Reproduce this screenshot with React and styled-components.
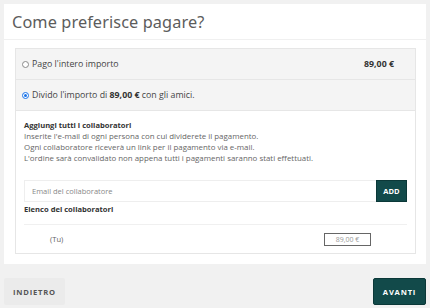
import React from "react";
import styled, { createGlobalStyle } from "styled-components";

const Global = createGlobalStyle`
  html, body { margin: 0; padding: 0; background: #f1f1f1; }
  body { font-family: "Open Sans", "Liberation Sans", sans-serif; color: #333; }
  * { box-sizing: border-box; }
`;

const Page = styled.div`
  width: 430px;
  height: 308px;
  padding: 4px 4px 0 4px;
  display: flex;
  flex-direction: column;
`;

const Card = styled.div`
  background: #fff;
  display: flex;
  flex-direction: column;
`;

const Header = styled.div`
  height: 36px;
  border-bottom: 1px solid #f0f0f0;
  display: flex;
  align-items: center;
  padding-left: 8px;
`;

const Title = styled.h1`
  margin: 0;
  font-family: "Noto Sans", "Open Sans", sans-serif;
  font-weight: 400;
  font-size: 16.3px;
  color: #5c5c5c;
  letter-spacing: 0.1px;
`;

const Body = styled.div`
  padding: 8px 10px 10px 11px;
`;

const Box = styled.div`
  border: 1px solid #e6e6e6;
`;

const OptionRow = styled.label`
  display: flex;
  align-items: center;
  height: 31px;
  background: #f4f4f4;
  border-bottom: 1px solid #e6e6e6;
  padding: 0 21px 0 6px;
  font-size: 8.8px;
  color: #444;
`;

const Radio = styled.span`
  width: 7px;
  height: 7px;
  border-radius: 50%;
  border: 1px solid ${(p) => (p.$checked ? "#1a73e8" : "#8a8a8a")};
  background: #fff;
  margin-right: 3px;
  display: flex;
  align-items: center;
  justify-content: center;
  &::after {
    content: "";
    width: 3px;
    height: 3px;
    border-radius: 50%;
    background: ${(p) => (p.$checked ? "#1a73e8" : "transparent")};
  }
`;

const OptionText = styled.span`
  flex: 1;
  b { font-weight: 700; color: #333; }
`;

const Amount = styled.span`
  font-weight: 700;
  color: #333;
`;

const Collab = styled.div`
  padding: 9px 8px 0 8px;
`;

const Heading = styled.div`
  font-size: 7.6px;
  font-weight: 700;
  color: #333;
  line-height: 11px;
`;

const Info = styled.p`
  margin: 0;
  font-size: 7.9px;
  color: #666;
  line-height: 11px;
`;

const InputRow = styled.div`
  display: flex;
  margin-top: 16px;
  height: 22px;
`;

const Input = styled.input`
  flex: 1;
  border: 1px solid #eee;
  border-right: none;
  padding: 0 7px;
  font-family: "Open Sans", sans-serif;
  font-size: 7.5px;
  color: #555;
  outline: none;
  &::placeholder { color: #888; }
`;

const AddButton = styled.button`
  width: 31px;
  border: 1px solid #0b3838;
  background: #124a4a;
  color: #fff;
  font-family: "Open Sans", sans-serif;
  font-size: 7.5px;
  font-weight: 700;
  padding: 0;
`;

const ListHeading = styled(Heading)`
  margin-top: 2px;
  padding-bottom: 9px;
  border-bottom: 1px solid #f0f0f0;
`;

const MemberRow = styled.div`
  display: flex;
  align-items: center;
  height: 28px;
  padding-left: 26px;
  padding-right: 36px;
  font-size: 7.6px;
  color: #666;
`;

const MemberName = styled.span`
  flex: 1;
`;

const PriceBox = styled.span`
  width: 47px;
  height: 13px;
  border: 1px solid #666;
  display: flex;
  align-items: center;
  justify-content: center;
  font-size: 7px;
  color: #999;
`;

const Footer = styled.div`
  display: flex;
  justify-content: space-between;
  margin-top: 14px;
`;

const NavButton = styled.button`
  height: 27px;
  padding: 0;
  border: ${(p) => (p.$primary ? "1px solid #0b3838" : "none")};
  background: ${(p) => (p.$primary ? "#124a4a" : "#ebebeb")};
  color: ${(p) => (p.$primary ? "#fff" : "#555")};
  font-family: "Open Sans", sans-serif;
  font-weight: 700;
  font-size: 7.6px;
  letter-spacing: 0.8px;
  border-radius: 2px;
  width: ${(p) => (p.$primary ? "53px" : "61px")};
`;

export default function App() {
  return (
    <>
      <Global />
      <Page>
        <Card>
          <Header>
            <Title>Come preferisce pagare?</Title>
          </Header>
          <Body>
            <Box>
              <OptionRow>
                <Radio />
                <OptionText>Pago l'intero importo</OptionText>
                <Amount>89,00 €</Amount>
              </OptionRow>
              <OptionRow>
                <Radio $checked />
                <OptionText>
                  Divido l'importo di <b>89,00 €</b> con gli amici.
                </OptionText>
              </OptionRow>
              <Collab>
                <Heading>Aggiungi tutti i collaboratori</Heading>
                <Info>Inserite l'e-mail di ogni persona con cui dividerete il pagamento.</Info>
                <Info>Ogni collaboratore riceverà un link per il pagamento via e-mail.</Info>
                <Info>L'ordine sarà convalidato non appena tutti i pagamenti saranno stati effettuati.</Info>
                <InputRow>
                  <Input placeholder="Email del collaboratore" />
                  <AddButton>ADD</AddButton>
                </InputRow>
                <ListHeading>Elenco dei collaboratori</ListHeading>
                <MemberRow>
                  <MemberName>(Tu)</MemberName>
                  <PriceBox>89,00 €</PriceBox>
                </MemberRow>
              </Collab>
            </Box>
          </Body>
        </Card>
        <Footer>
          <NavButton>INDIETRO</NavButton>
          <NavButton $primary>AVANTI</NavButton>
        </Footer>
      </Page>
    </>
  );
}
